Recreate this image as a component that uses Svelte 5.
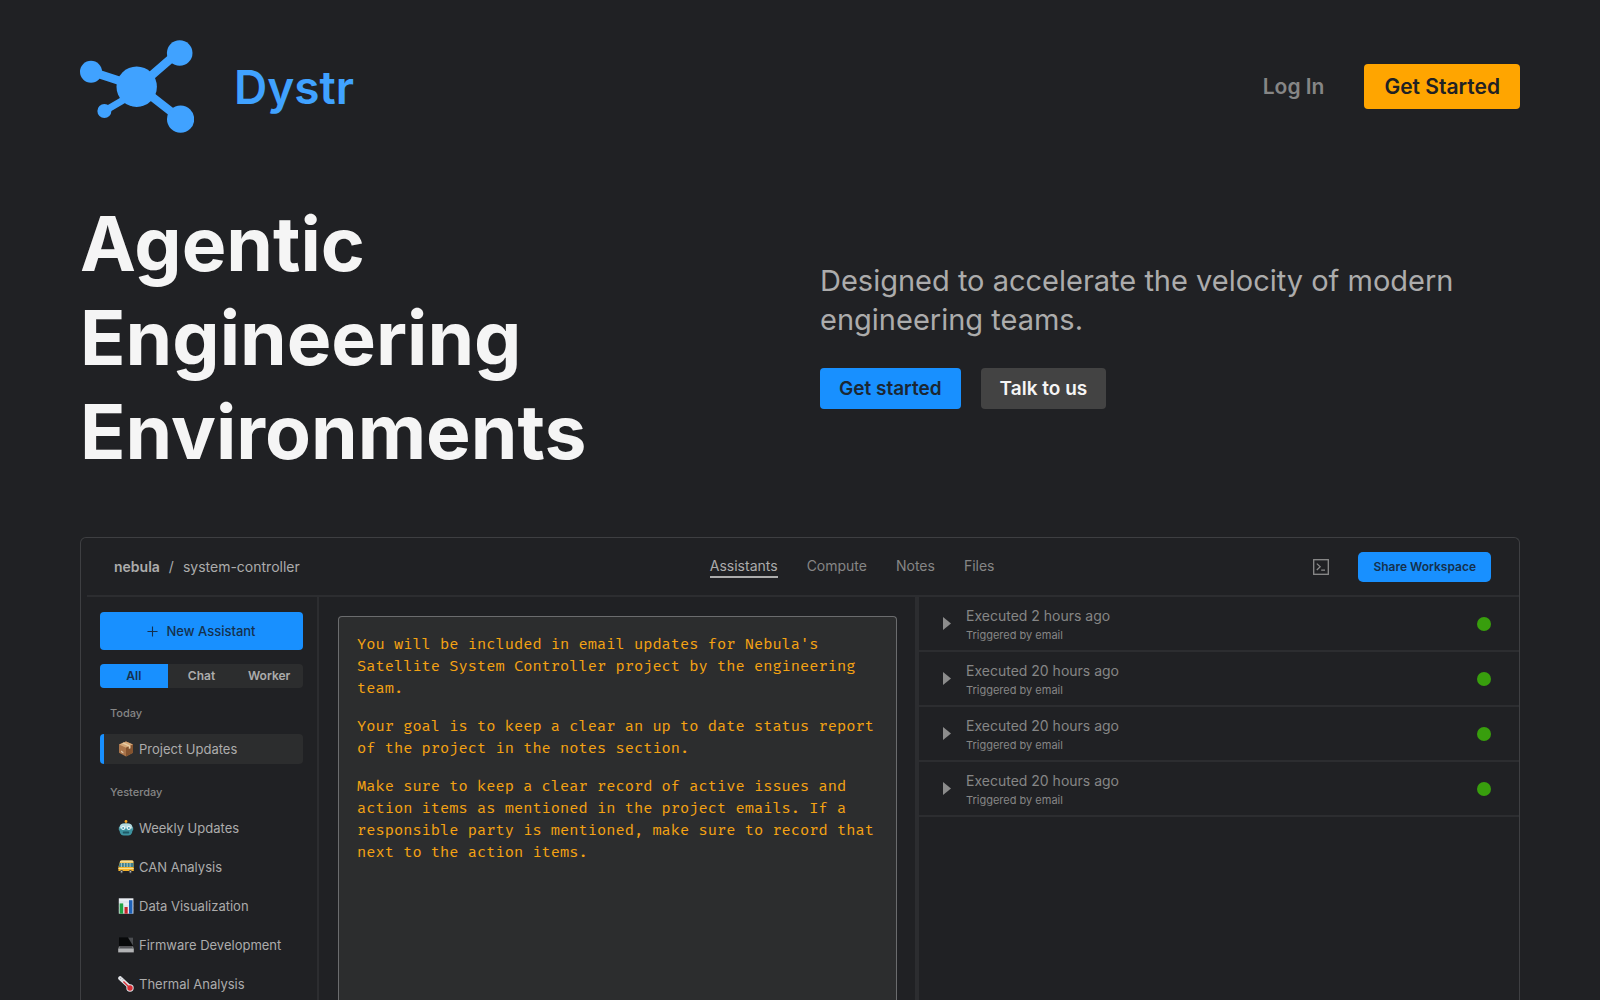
<script>
	const tabs = ['Assistants', 'Compute', 'Notes', 'Files'];
	const filters = ['All', 'Chat', 'Worker'];

	const groups = [
		{ label: 'Today', items: [{ icon: 'package', name: 'Project Updates' }] },
		{
			label: 'Yesterday',
			items: [
				{ icon: 'robot', name: 'Weekly Updates' },
				{ icon: 'bus', name: 'CAN Analysis' },
				{ icon: 'chart', name: 'Data Visualization' },
				{ icon: 'laptop', name: 'Firmware Development' },
				{ icon: 'thermometer', name: 'Thermal Analysis' }
			]
		}
	];

	const prompt = [
		"You will be included in email updates for Nebula's Satellite System Controller project by the engineering team.",
		'Your goal is to keep a clear an up to date status report of the project in the notes section.',
		'Make sure to keep a clear record of active issues and action items as mentioned in the project emails. If a responsible party is mentioned, make sure to record that next to the action items.'
	];

	const runs = [
		{ id: 1, age: '2 hours' },
		{ id: 2, age: '20 hours' },
		{ id: 3, age: '20 hours' },
		{ id: 4, age: '20 hours' }
	];

	let activeTab = $state('Assistants');
	let activeFilter = $state('All');
	let selected = $state('Project Updates');
</script>

{#snippet itemIcon(name)}
	<svg class="item-icon" viewBox="0 0 16 16" aria-hidden="true">
		{#if name === 'package'}
			<path d="M8 .5 15 3.5v8.3L8 15.6 1 11.8V3.5z" fill="#a9744a" />
			<path d="M8 .5 15 3.5 8 6.8 1 3.5z" fill="#d3a677" />
			<path d="M8 6.8v8.8l7-3.8V3.5z" fill="#84532f" />
			<path d="M3.9 2.2 5.5 1.5l7 3.2v2.6l-1.7.8V5.5z" fill="#e7cda6" />
			<path d="M3 9.6l2.4 1.3v1.5L3 11.1z" fill="#e0c8ab" />
		{:else if name === 'robot'}
			<circle cx="8" cy="1.5" r="1.4" fill="#f5a623" />
			<path d="M7.3 2.4h1.4V4H7.3z" fill="#c9862a" />
			<rect x=".8" y="6.4" width="14.4" height="4.6" rx="1.4" fill="#4f9aa5" />
			<rect x="1.7" y="3.4" width="12.6" height="12.2" rx="4.2" fill="#3d929f" />
			<path d="M1.7 8.6V7.6Q1.7 3.4 5.9 3.4h4.2q4.200 0 4.200 4.200v1z" fill="#b4d9dd" />
			<circle cx="5.2" cy="8" r="2" fill="#eef9fa" />
			<circle cx="10.8" cy="8" r="2" fill="#eef9fa" />
			<circle cx="5.2" cy="8" r="1" fill="#4a9bb0" />
			<circle cx="10.8" cy="8" r="1" fill="#4a9bb0" />
			<rect x="4.8" y="11.600" width="6.4" height="1.8" rx=".6" fill="#1e5967" />
		{:else if name === 'bus'}
			<path d="M2 2.6Q2.2 1.6 4 1.6h10q1.4 0 1.5 1.4l.3 9H.4V8z" fill="#f6b42c" />
			<path d="M2 2.6Q2.2 1.6 4 1.6h10q1.2 0 1.4 1L15.4 3.4H1.8z" fill="#f3dc94" />
			<path d="M1.6 4h13.9l.1 4H.7z" fill="#3f7f8c" />
			<path d="M3.4 4v4M6.3 4v4M9.2 4v4M12.1 4v4" stroke="#d8e7df" stroke-width=".7" />
			<path d="M.4 9h15.3v1H.4z" fill="#fbe08a" />
			<circle cx="3.6" cy="12.8" r="1.7" fill="#44464a" />
			<circle cx="12.4" cy="12.8" r="1.7" fill="#44464a" />
			<circle cx="3.6" cy="12.8" r=".7" fill="#c8c8c8" />
			<circle cx="12.4" cy="12.8" r=".7" fill="#c8c8c8" />
		{:else if name === 'chart'}
			<rect x=".8" y=".3" width="14.6" height="15.4" fill="#e9edf2" />
			<path d="M.8 4h14.6M.8 8h14.6M.8 12h14.6" stroke="#c5cfdb" stroke-width=".5" />
			<rect x="1.6" y="5.4" width="3.6" height="10.3" fill="#22a244" />
			<rect x="6.5" y="9" width="3.2" height="6.7" fill="#c7252c" />
			<rect x="11" y="2.2" width="3.5" height="13.5" fill="#1e62b8" />
		{:else if name === 'laptop'}
			<path d="M1 .4h14v9.4H1z" fill="#08090a" />
			<path d="M10 .4h5v8.4z" fill="#4b4d51" />
			<path d="M1 9.2h14l.8 2.600H.2z" fill="#77797c" />
			<path d="M2.3 9.6h11.4l.4 1.2H1.9z" fill="#4a4b4e" />
			<path d="M.2 11.6h15.6v3.8H.2z" fill="#b2b3b5" />
		{:else}
			<path d="M2.2 2.2 11 10.4" stroke="#e3e5e9" stroke-width="4" stroke-linecap="round" />
			<circle cx="12" cy="12" r="3.7" fill="#dfe0e4" />
			<circle cx="12" cy="12" r="2.7" fill="#d92f36" />
			<path d="M5.4 5.4 12 12" stroke="#d92f36" stroke-width="1.4" />
			<path d="M3.4 1.6 2 3.2M5.2 3.2 4.2 4.4" stroke="#7d8087" stroke-width=".6" />
		{/if}
	</svg>
{/snippet}

<div class="page">
	<header class="site-header">
		<a class="brand" href="/">
			<svg class="logo" viewBox="0 0 114 93" aria-hidden="true">
				<g stroke="#40a2ff" fill="none">
					<path d="M11 31.5 57 46.5M57 48 99.7 11M57 45 100.5 79" stroke-width="8.5" />
					<path d="M24.5 71 57 52" stroke-width="7" />
				</g>
				<g fill="#40a2ff">
					<circle cx="56.7" cy="46.7" r="20.2" />
					<circle cx="11" cy="31.7" r="11" />
					<circle cx="99.7" cy="13" r="12.8" />
					<circle cx="100.6" cy="79.2" r="13.6" />
					<circle cx="24.4" cy="71" r="7" />
				</g>
			</svg>
			<span>Dystr</span>
		</a>
		<nav class="account">
			<a class="login" href="/login">Log In</a>
			<a class="signup" href="/signup">Get Started</a>
		</nav>
	</header>

	<section class="hero">
		<h1>Agentic<br />Engineering<br />Environments</h1>
		<div class="pitch">
			<p>Designed to accelerate the velocity of modern engineering teams.</p>
			<div class="actions">
				<button class="primary" type="button">Get started</button>
				<button class="secondary" type="button">Talk to us</button>
			</div>
		</div>
	</section>

	<main class="workspace">
		<div class="topbar">
			<div class="crumbs">
				<strong>nebula</strong>
				<span>/</span>
				<span>system-controller</span>
			</div>
			<nav class="tabs">
				{#each tabs as tab}
					<button type="button" class:active={tab === activeTab} onclick={() => (activeTab = tab)}>{tab}</button>
				{/each}
			</nav>
			<div class="tools">
				<button class="terminal" type="button" aria-label="Open terminal">
					<svg viewBox="0 0 16 16" aria-hidden="true">
						<rect x=".7" y=".7" width="14.6" height="14.6" fill="none" stroke="#8c8c8c" stroke-width="1.3" />
						<path d="M3.8 4.6 7.2 7.8 3.8 11M8.2 11.2h3.8" fill="none" stroke="#8c8c8c" stroke-width="1.2" />
					</svg>
				</button>
				<button class="share" type="button">Share Workspace</button>
			</div>
		</div>

		<div class="columns">
			<aside class="sidebar">
				<button class="new-assistant" type="button">
					<svg viewBox="0 0 12 12" aria-hidden="true">
						<path d="M6 .5v11M.5 6h11" stroke="#15304d" stroke-width="1.2" />
					</svg>
					New Assistant
				</button>
				<div class="filters">
					{#each filters as filter}
						<button type="button" class:active={filter === activeFilter} onclick={() => (activeFilter = filter)}>{filter}</button>
					{/each}
				</div>
				{#each groups as group}
					<section class="group">
						<h2>{group.label}</h2>
						{#each group.items as item}
							<button class="item" type="button" class:selected={item.name === selected} onclick={() => (selected = item.name)}>
								{@render itemIcon(item.icon)}
								{item.name}
							</button>
						{/each}
					</section>
				{/each}
			</aside>

			<div class="editor">
				<div class="prompt">
					{#each prompt as paragraph}
						<p>{paragraph}</p>
					{/each}
				</div>
			</div>

			<div class="runs">
				{#each runs as run (run.id)}
					<div class="run">
						<button class="expand" type="button" aria-label="Show run {run.id}">
							<svg viewBox="0 0 8 13" aria-hidden="true"><path d="M0 0 8 6.5 0 13z" fill="#8c8c8c" /></svg>
						</button>
						<div class="run-text">
							<div class="run-title">Executed {run.age} ago</div>
							<div class="run-source">Triggered by email</div>
						</div>
						<span class="status"></span>
					</div>
				{/each}
			</div>
		</div>
	</main>
</div>

<style>
	:global(body) {
		background: #202124;
	}

	.page {
		box-sizing: border-box;
		display: flex;
		flex-direction: column;
		min-height: 100vh;
		padding: 40px 80px 0;
		font-family: Inter, 'Liberation Sans', sans-serif;
		color: #acacac;
	}

	button {
		margin: 0;
		padding: 0;
		border: 0;
		background: none;
		color: inherit;
		font: inherit;
		cursor: pointer;
	}

	a {
		text-decoration: none;
	}

	.site-header {
		display: flex;
		align-items: center;
		justify-content: space-between;
	}

	.brand {
		display: flex;
		align-items: center;
		gap: 40px;
		color: #40a2ff;
		font-size: 46px;
		font-weight: 600;
	}

	.logo {
		width: 114px;
		height: 93px;
	}

	.account {
		display: flex;
		align-items: center;
		gap: 40px;
		font-size: 21px;
		font-weight: 600;
	}

	.login {
		color: #868686;
	}

	.signup {
		padding: 0 20px;
		border-radius: 4px;
		background: #ffa500;
		color: #202124;
		line-height: 45px;
	}

	.hero {
		display: grid;
		grid-template-columns: 1fr 1fr;
		align-items: center;
		gap: 40px;
		padding: 64px 0 58px;
	}

	h1 {
		margin: 0;
		color: #f5f5f5;
		font-size: 75px;
		font-weight: 700;
		line-height: 94px;
	}

	.pitch {
		padding-bottom: 7px;
	}

	.pitch p {
		margin: 0 0 29px;
		font-size: 29px;
		line-height: 39px;
	}

	.actions {
		display: flex;
		gap: 20px;
		font-size: 19px;
		font-weight: 600;
		line-height: 41px;
	}

	.actions button {
		padding: 0 19px;
		border-radius: 4px;
	}

	.primary {
		background: #1890ff;
		color: #1b2733;
	}

	.secondary {
		background: #434343;
		color: #f5f5f5;
	}

	.workspace {
		flex: 1;
		display: flex;
		flex-direction: column;
		border: 1px solid #3e3f42;
		border-bottom: 0;
		border-radius: 6px 6px 0 0;
	}

	.topbar {
		display: grid;
		grid-template-columns: 6fr auto 5fr;
		align-items: center;
		height: 57px;
		margin-left: 6px;
		padding: 0 28px 0 27px;
		border-bottom: 2px solid #2c2d30;
		font-size: 14px;
	}

	.crumbs {
		display: flex;
		gap: 9px;
	}

	.crumbs strong {
		font-weight: 600;
	}

	.tabs {
		display: flex;
		gap: 29px;
		color: #868686;
	}

	.tabs button {
		border-bottom: 2px solid transparent;
		line-height: 21px;
	}

	.tabs .active {
		border-color: #acacac;
		color: #acacac;
	}

	.tools {
		display: flex;
		align-items: center;
		justify-content: flex-end;
		gap: 29px;
	}

	.terminal,
	.terminal svg {
		display: block;
		width: 16px;
		height: 16px;
	}

	.share {
		padding: 0 15px;
		border-radius: 5px;
		background: #1890ff;
		color: #15304d;
		font-size: 12px;
		font-weight: 600;
		line-height: 30px;
	}

	.columns {
		flex: 1;
		display: grid;
		grid-template-columns: 238px 1fr 1fr;
	}

	.sidebar {
		padding: 15px 14px 0 19px;
		border-right: 2px solid #2c2d30;
		font-size: 13px;
	}

	.new-assistant {
		display: flex;
		align-items: center;
		justify-content: center;
		gap: 8px;
		width: 100%;
		height: 38px;
		border-radius: 4px;
		background: #1890ff;
		color: #15304d;
		font-weight: 500;
	}

	.new-assistant svg {
		width: 11px;
		height: 11px;
	}

	.filters {
		display: grid;
		grid-template-columns: repeat(3, 1fr);
		margin-top: 14px;
		border-radius: 4px;
		background: #2c2d2e;
		overflow: hidden;
		font-size: 12px;
		font-weight: 600;
		line-height: 24px;
	}

	.filters .active {
		background: #1890ff;
		color: #15304d;
	}

	h2 {
		margin: 0;
		padding: 17px 0 12px 10px;
		color: #868686;
		font-size: 11px;
		font-weight: 500;
		line-height: 17px;
	}

	.item {
		display: flex;
		align-items: center;
		gap: 5px;
		width: 100%;
		height: 30px;
		margin-bottom: 9px;
		padding-left: 14px;
		border-left: 4px solid transparent;
		border-radius: 4px;
	}

	.item:last-child {
		margin-bottom: 3px;
	}

	.item.selected {
		border-color: #1890ff;
		background: #2c2d2e;
	}

	.item-icon {
		width: 16px;
		height: 16px;
	}

	.editor {
		display: flex;
		padding: 19px 18px 0 19px;
		border-right: 4px solid #2c2d30;
	}

	.prompt {
		flex: 1;
		padding: 17px 18px 0;
		border: 1px solid #6b6c6e;
		border-bottom: 0;
		border-radius: 4px 4px 0 0;
		background: #2c2d2e;
		color: #f5a313;
		font-family: 'Fira Code', 'Fira Mono', 'DejaVu Sans Mono', monospace;
		font-size: 15px;
		line-height: 22px;
	}

	.prompt p {
		margin: 0 0 16px;
	}

	.run {
		display: flex;
		align-items: center;
		height: 53px;
		padding: 0 28px 0 24px;
		border-bottom: 2px solid #2c2d30;
		color: #868686;
	}

	.expand,
	.expand svg {
		display: block;
		width: 8px;
		height: 13px;
	}

	.run-text {
		flex: 1;
		padding: 3px 0 0 15px;
	}

	.run-title {
		font-size: 14px;
		line-height: 20px;
	}

	.run-source {
		font-size: 11px;
		line-height: 19px;
	}

	.status {
		width: 14px;
		height: 14px;
		border-radius: 50%;
		background: #389e0d;
	}
</style>
